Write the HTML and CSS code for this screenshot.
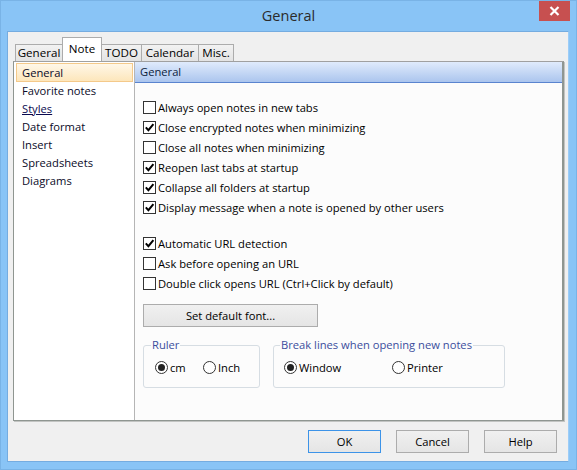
FILE: index.html
```html
<!DOCTYPE html>
<html>
<head>
<meta charset="utf-8">
<link rel="stylesheet" href="styles.css">
</head>
<body>
<div class="window">
  <div class="titlebar">
    <div class="title">General</div>
    <div class="close"><svg width="11" height="10" viewBox="0 0 11 10"><path d="M1.5 1 L9.5 9 M9.5 1 L1.5 9" stroke="#fff" stroke-width="2.2" fill="none"/></svg></div>
  </div>
  <div class="client">
    <div class="tabs">
      <div class="tab t-general">General</div>
      <div class="tab active t-note">Note</div>
      <div class="tab t-todo">TODO</div>
      <div class="tab t-cal">Calendar</div>
      <div class="tab t-misc">Misc.</div>
    </div>
    <div class="panel">
      <ul class="list">
        <li class="item selected">General</li>
        <li class="item">Favorite notes</li>
        <li class="item hover">Styles</li>
        <li class="item">Date format</li>
        <li class="item">Insert</li>
        <li class="item">Spreadsheets</li>
        <li class="item">Diagrams</li>
      </ul>
      <div class="page">
        <div class="header">General</div>
        <div class="body">
          <div class="group">
            <div class="check"><span class="box"></span>Always open notes in new tabs</div>
            <div class="check"><span class="box on"><svg width="11" height="11" viewBox="0 0 11 11"><path d="M1.8 5.4 L4.4 8.2 L9.4 2.2" stroke="#000" stroke-width="2" fill="none"/></svg></span>Close encrypted notes when minimizing</div>
            <div class="check"><span class="box"></span>Close all notes when minimizing</div>
            <div class="check"><span class="box on"><svg width="11" height="11" viewBox="0 0 11 11"><path d="M1.8 5.4 L4.4 8.2 L9.4 2.2" stroke="#000" stroke-width="2" fill="none"/></svg></span>Reopen last tabs at startup</div>
            <div class="check"><span class="box on"><svg width="11" height="11" viewBox="0 0 11 11"><path d="M1.8 5.4 L4.4 8.2 L9.4 2.2" stroke="#000" stroke-width="2" fill="none"/></svg></span>Collapse all folders at startup</div>
            <div class="check"><span class="box on"><svg width="11" height="11" viewBox="0 0 11 11"><path d="M1.8 5.4 L4.4 8.2 L9.4 2.2" stroke="#000" stroke-width="2" fill="none"/></svg></span>Display message when a note is opened by other users</div>
          </div>
          <div class="group second">
            <div class="check"><span class="box on"><svg width="11" height="11" viewBox="0 0 11 11"><path d="M1.8 5.4 L4.4 8.2 L9.4 2.2" stroke="#000" stroke-width="2" fill="none"/></svg></span>Automatic URL detection</div>
            <div class="check"><span class="box"></span>Ask before opening an URL</div>
            <div class="check"><span class="box"></span>Double click opens URL (Ctrl+Click by default)</div>
          </div>
          <button class="btn font-btn">Set default font...</button>
          <div class="fields">
            <fieldset class="fs ruler">
              <legend>Ruler</legend>
              <div class="radios">
                <div class="radio r-first"><span class="dot on"></span>cm</div>
                <div class="radio"><span class="dot"></span>Inch</div>
              </div>
            </fieldset>
            <fieldset class="fs breaks">
              <legend>Break lines when opening new notes</legend>
              <div class="radios">
                <div class="radio b-first"><span class="dot on"></span>Window</div>
                <div class="radio"><span class="dot"></span>Printer</div>
              </div>
            </fieldset>
          </div>
        </div>
      </div>
    </div>
    <div class="buttons">
      <button class="btn dlg default">OK</button>
      <button class="btn dlg">Cancel</button>
      <button class="btn dlg">Help</button>
    </div>
  </div>
</div>
</body>
</html>
```
FILE: styles.css
```css
* { box-sizing: border-box; }
html, body { margin: 0; padding: 0; }
body {
  font-family: "Open Sans", "Noto Sans", sans-serif;
  font-size: 11.2px;
  color: #000;
  background: #89c4f6;
}
.window {
  width: 577px;
  height: 470px;
  background: #89c4f6;
  border: 1px solid #79b3e6;
  display: flex;
  flex-direction: column;
}
.titlebar {
  height: 30px;
  display: grid;
  grid-template-columns: 1fr auto 1fr;
  align-items: start;
}
.title {
  grid-column: 2;
  font-size: 14.5px;
  color: #2b2b2b;
  line-height: 30px;
}
.close {
  grid-column: 3;
  justify-self: end;
  margin-right: 6px;
  width: 31px;
  height: 20px;
  background: #c75050;
  display: flex;
  align-items: center;
  justify-content: center;
}
.client {
  margin: 0 7px 0 6px;
  height: 431px;
  background: #f0f0f0;
  border: 1px solid #75ace0;
  border-right: 1px solid #9ccdf8;
  border-bottom: 1px solid #75ace0;
  padding: 5px 0 0 5px;
  display: flex;
  flex-direction: column;
}
.tabs {
  display: flex;
  align-items: flex-end;
  height: 24px;
  padding-left: 2px;
}
.tab {
  height: 17px;
  border: 1px solid #acacac;
  border-bottom: none;
  background: linear-gradient(#f2f2f2, #e3e3e3);
  line-height: 15px;
  margin-right: -1px;
  text-align: center;
  font-size: 11.6px;
}
.t-general { width: 48px; }
.t-note { width: 40px; }
.t-todo { width: 41px; }
.t-cal { width: 58px; }
.t-misc { width: 36px; }
.tab.active {
  height: 24px;
  background: #fff;
  line-height: 22px;
  position: relative;
  z-index: 1;
}
.panel {
  width: 551px;
  height: 360px;
  display: flex;
  border: 1px solid #8f9691;
  border-top-color: #a0a0a0;
  box-shadow: 1px 1px 0 #c2c4c2;
}
.list {
  list-style: none;
  margin: 0;
  padding: 1px 0 0 2px;
  width: 121px;
  background: #fff;
  border-right: 1px solid #b5b5b5;
}
.item {
  height: 18px;
  line-height: 18px;
  padding-left: 6px;
  color: #0a0a28;
}
.item.selected {
  width: 117px;
  height: 19px;
  line-height: 17px;
  padding-left: 5px;
  border: 1px solid #f4c98a;
  background: linear-gradient(#fff7e8, #fde6bb);
}
.item.hover { text-decoration: underline; color: #0a0a50; }
.page {
  flex: 1;
  background: #fcfcfc;
  display: flex;
  flex-direction: column;
  border-right: 1px solid #8f9691;
}
.header {
  height: 21px;
  line-height: 20px;
  padding-left: 5px;
  background: linear-gradient(#e0ebfc, #abc5ee);
  border-bottom: 1px solid #5a84cf;
  color: #0c1d3e;
}
.body {
  padding: 14px 0 0 8px;
  display: flex;
  flex-direction: column;
}
.group.second { margin-top: 16px; }
.check {
  height: 20px;
  display: flex;
  align-items: center;
}
.box {
  width: 13px;
  height: 13px;
  border: 1px solid #333;
  background: #fff;
  margin-right: 2px;
  display: flex;
  align-items: center;
  justify-content: center;
}
.btn {
  font-family: inherit;
  font-size: inherit;
  color: #000;
  height: 23px;
  border: 1px solid #acacac;
  background: linear-gradient(#f0f0f0, #e5e5e5);
  padding: 0;
}
.font-btn {
  margin-top: 11px;
  width: 175px;
}
.fields {
  display: flex;
  gap: 13px;
  margin-top: 11px;
}
.fs {
  margin: 0;
  padding: 6px 0 0 11px;
  height: 50px;
  border: 1px solid #d6dde3;
  border-radius: 3px;
}
.fs legend {
  padding: 0 1px;
  margin-left: -4px;
  color: #3b4e9c;
  line-height: 14px;
}
.ruler { width: 117px; }
.breaks { width: 232px; padding-left: 10px; }
.radios { display: flex; align-items: center; height: 18px; }
.radio { display: flex; align-items: center; }
.r-first { width: 48px; }
.b-first { width: 108px; }
.dot {
  width: 13px;
  height: 13px;
  border: 1px solid #333;
  border-radius: 50%;
  background: #fff;
  margin-right: 2px;
  display: flex;
  align-items: center;
  justify-content: center;
}
.dot.on::after {
  content: "";
  width: 7px;
  height: 7px;
  border-radius: 50%;
  background: #222;
}
.buttons {
  display: flex;
  justify-content: flex-end;
  gap: 15px;
  margin-top: 9px;
  padding-right: 11px;
}
.dlg { width: 73px; }
.default { border-color: #3c93e8; }
```
